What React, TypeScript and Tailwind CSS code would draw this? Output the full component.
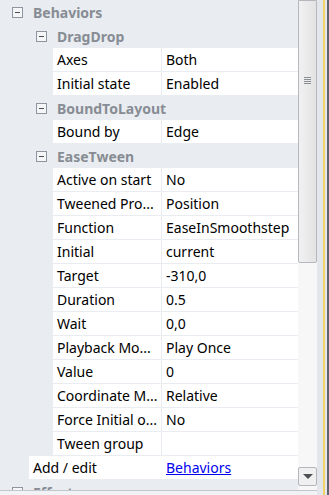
import React from 'react'

type Row =
	| { kind: 'group'; label: string; level: number }
	| { kind: 'prop'; name: string; value: string }
	| { kind: 'link'; name: string; value: string }

const rows: Row[] = [
	{ kind: 'group', label: 'Behaviors', level: 0 },
	{ kind: 'group', label: 'DragDrop', level: 1 },
	{ kind: 'prop', name: 'Axes', value: 'Both' },
	{ kind: 'prop', name: 'Initial state', value: 'Enabled' },
	{ kind: 'group', label: 'BoundToLayout', level: 1 },
	{ kind: 'prop', name: 'Bound by', value: 'Edge' },
	{ kind: 'group', label: 'EaseTween', level: 1 },
	{ kind: 'prop', name: 'Active on start', value: 'No' },
	{ kind: 'prop', name: 'Tweened Pro...', value: 'Position' },
	{ kind: 'prop', name: 'Function', value: 'EaseInSmoothstep' },
	{ kind: 'prop', name: 'Initial', value: 'current' },
	{ kind: 'prop', name: 'Target', value: '-310,0' },
	{ kind: 'prop', name: 'Duration', value: '0.5' },
	{ kind: 'prop', name: 'Wait', value: '0,0' },
	{ kind: 'prop', name: 'Playback Mo...', value: 'Play Once' },
	{ kind: 'prop', name: 'Value', value: '0' },
	{ kind: 'prop', name: 'Coordinate M...', value: 'Relative' },
	{ kind: 'prop', name: 'Force Initial o...', value: 'No' },
	{ kind: 'prop', name: 'Tween group', value: '' },
	{ kind: 'link', name: 'Add / edit', value: 'Behaviors' },
	{ kind: 'group', label: 'Effects', level: 0 },
]

const Minus = () => (
	<span className="flex h-[11px] w-[11px] items-center justify-center border border-[#8f959e] bg-[#f4f6f8]">
		<span className="h-px w-[5px] bg-[#4a5059]" />
	</span>
)

const App = () => {
	return (
		<div
			className="flex h-[495px] w-[329px] overflow-hidden bg-[#e9ecf0] text-[14px] text-black"
			style={{ fontFamily: '"Noto Sans", "Open Sans", sans-serif' }}
		>
			<div className="flex w-[317px] flex-col">
				<div className="flex h-[490px]">
					{/* property grid */}
					<div className="flex w-[298px] flex-col overflow-hidden">
						{rows.map((row, i) => {
							if (row.kind === 'group') {
								return (
									<div
										key={i}
										className={`flex h-[24px] shrink-0 items-center gap-[10px] font-bold text-[#878c94] ${
											row.level === 0 ? 'pl-[12px]' : 'pl-[36px]'
										}`}
									>
										<Minus />
										<span>{row.label}</span>
									</div>
								)
							}
							if (row.kind === 'link') {
								return (
									<div key={i} className="flex h-[24px] shrink-0 pl-[29px]">
										<div className="flex h-[23px] w-[133px] items-center bg-white pl-[4px]">{row.name}</div>
										<div className="flex h-[23px] flex-1 items-center bg-white pl-[4px]">
											<span className="text-[#0000ee] underline">{row.value}</span>
										</div>
									</div>
								)
							}
							return (
								<div key={i} className="flex h-[24px] shrink-0 pl-[53px]">
									<div className="flex h-[23px] w-[108px] items-center overflow-hidden whitespace-nowrap bg-white pl-[4px]">
										{row.name}
									</div>
									<div className="ml-px flex h-[23px] flex-1 items-center whitespace-nowrap bg-white pl-[4px]">
										{row.value}
									</div>
								</div>
							)
						})}
					</div>
					{/* vertical scrollbar */}
					<div className="flex w-[19px] flex-col bg-[#f7f7f7]">
						<div className="flex h-[263px] justify-center rounded-b-[2px] border border-[#b4b7bc] bg-gradient-to-r from-[#f1f1f1] to-[#e3e3e3] pt-[76px]">
							<div className="flex flex-col gap-px">
								<span className="h-px w-[7px] bg-[#8a8d92]" />
								<span className="h-px w-[7px] bg-[#8a8d92]" />
								<span className="h-px w-[7px] bg-[#8a8d92]" />
								<span className="h-px w-[7px] bg-[#8a8d92]" />
							</div>
						</div>
						<div className="flex-1" />
						<div className="mb-[4px] flex h-[19px] items-center justify-center rounded-[2px] border border-[#b4b7bc] bg-[#f0f0f0]">
							<span className="h-0 w-0 border-x-[5px] border-t-[5px] border-x-transparent border-t-[#4d4f53]" />
						</div>
					</div>
				</div>
				<div className="flex-1 border-t border-[#c3c7cd] bg-[#f0f2f5]" />
			</div>
			{/* window edge */}
			<div className="w-[6px] bg-[#e3e6ea]" />
			<div className="w-[2px] bg-[#f5d36b]" />
			<div className="w-[2px] bg-[#e3e6ea]" />
			<div className="w-[2px] bg-[#5d6470]" />
		</div>
	)
}

export default App
